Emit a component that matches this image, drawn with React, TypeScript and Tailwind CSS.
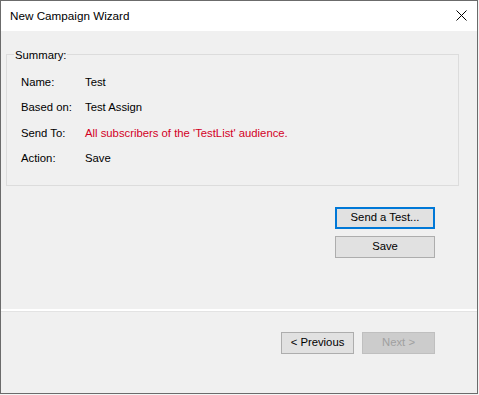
import React from 'react';

const rows: { label: string; value: string; red?: boolean }[] = [
  { label: 'Name:', value: 'Test' },
  { label: 'Based on:', value: 'Test Assign' },
  { label: 'Send To:', value: "All subscribers of the 'TestList' audience.", red: true },
  { label: 'Action:', value: 'Save' },
];

const sans = "font-['Liberation_Sans',Arial,sans-serif]";

export default function App() {
  return (
    <div className="w-[479px] h-[395px] bg-[#f4f4f4]">
      <div className="w-[478px] h-[394px] border border-[#6b6b6b] flex flex-col">
        {/* title bar */}
        <div className="h-[30px] bg-white flex items-center justify-between pl-[9px] pr-[10px]">
          <span className={`text-[11.7px] text-black ${sans} leading-none pb-[1px]`}>New Campaign Wizard</span>
          <svg width="11" height="11" viewBox="0 0 11 11" className="mb-[1px]">
            <path d="M0.5 0.5 L10.5 10.5 M10.5 0.5 L0.5 10.5" stroke="#000" strokeWidth="1" />
          </svg>
        </div>

        {/* body */}
        <div className={`flex-1 bg-[#f0f0f0] flex flex-col text-[11.3px] text-black ${sans}`}>
          <div className="relative mt-[23px] ml-[5px] w-[453px] h-[132px] border border-[#dcdcdc] pt-[15px] pl-[14px]">
            <span className="absolute left-[7px] top-[-7px] px-[1px] bg-[#f0f0f0] leading-[14px]">Summary:</span>
            {rows.map((r, i) => (
              <div key={r.label} className={`flex items-center ${i === 2 ? 'h-[26px] pt-[1px]' : 'h-[25px]'}`}>
                <span className="w-[64px]">{r.label}</span>
                <span className={r.red ? 'text-[#d3001f]' : ''}>{r.value}</span>
              </div>
            ))}
          </div>

          <div className="self-end mr-[42px] mt-[21px] flex flex-col gap-[7px]">
            <button className="w-[100px] h-[22px] bg-[#e1e1e1] border-2 border-[#0078d7] leading-none">Send a Test...</button>
            <button className="w-[100px] h-[22px] bg-[#e1e1e1] border border-[#adadad] leading-none">Save</button>
          </div>

          <div className="flex-1" />

          <div className="h-[2px] bg-white" />
          <div className="h-[1px] bg-[#e3e3e3]" />

          <div className="flex justify-end gap-[8px] mr-[42px] mt-[20px] mb-[39px]">
            <button className="w-[73px] h-[22px] bg-[#e1e1e1] border border-[#adadad] leading-none">&lt; Previous</button>
            <button className="w-[73px] h-[22px] bg-[#cccccc] border border-[#bfbfbf] text-[#a0a0a0] leading-none">Next &gt;</button>
          </div>
        </div>
      </div>
    </div>
  );
}
